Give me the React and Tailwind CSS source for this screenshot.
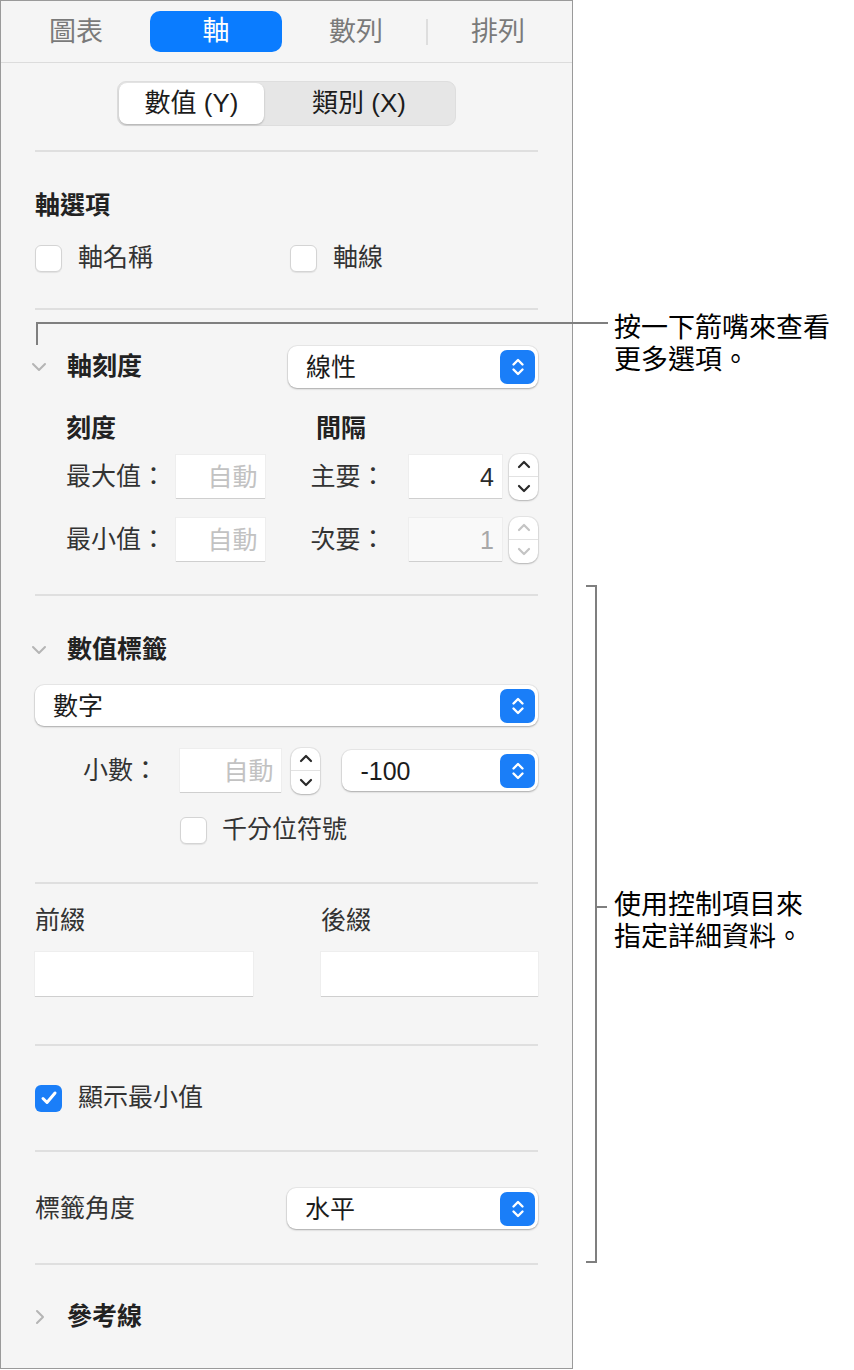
import React from 'react';

const Divider = () => <div className="h-[2px] bg-[#dfdfdf]" />;

const PopupArrows = () => (
  <div className="w-[35px] h-[34px] rounded-[7px] bg-[#1a7ef8] flex items-center justify-center">
    <svg width="16" height="24" viewBox="0 0 16 24">
      <path d="M3.5 9.5 L8 5 L12.5 9.5 M3.5 14.5 L8 19 L12.5 14.5" stroke="white" strokeWidth="2.4" fill="none" strokeLinecap="round" strokeLinejoin="round" />
    </svg>
  </div>
);

const Popup = ({ label, className }) => (
  <div className={`h-[41px] bg-white rounded-[9px] shadow-[0_0_0_1px_rgba(0,0,0,0.05),0_1px_2px_rgba(0,0,0,0.28)] flex items-center justify-between pl-[18px] pr-[3px] ${className}`}>
    <span className="text-[25px] leading-[32px] text-[#1c1c1c]">{label}</span>
    <PopupArrows />
  </div>
);

const Stepper = ({ disabled }) => {
  const c = disabled ? '#c4c4c4' : '#2a2a2a';
  return (
    <div className="w-[29px] h-[46px] rounded-[10px] bg-white shadow-[0_0_0_1px_rgba(0,0,0,0.06),0_1px_2px_rgba(0,0,0,0.22)] flex flex-col">
      <div className="flex-1 flex items-center justify-center border-b border-[#e2e2e2]">
        <svg width="14" height="9" viewBox="0 0 14 9">
          <path d="M2 7 L7 2 L12 7" stroke={c} strokeWidth="2.2" fill="none" strokeLinecap="round" strokeLinejoin="round" />
        </svg>
      </div>
      <div className="flex-1 flex items-center justify-center">
        <svg width="14" height="9" viewBox="0 0 14 9">
          <path d="M2 2 L7 7 L12 2" stroke={c} strokeWidth="2.2" fill="none" strokeLinecap="round" strokeLinejoin="round" />
        </svg>
      </div>
    </div>
  );
};

const Field = ({ value, placeholder, disabled, className }) => (
  <div className={`h-[43px] flex items-center justify-end pr-[8px] text-[25px] leading-[32px] shadow-[0_1px_0_#cfcfcf,0_0_0_1px_#eeeeee] ${disabled ? 'bg-[#f9f9f9] text-[#a8a8a8]' : 'bg-white text-[#2a2a2a]'} ${className}`}>
    {value ? value : <span className="text-[#c2c2c2]">{placeholder}</span>}
  </div>
);

const Checkbox = ({ checked }) =>
  checked ? (
    <div className="w-[27px] h-[27px] rounded-[6px] bg-[#1a7ef8] flex items-center justify-center">
      <svg width="18" height="16" viewBox="0 0 18 16">
        <path d="M3 8.5 L7 12.5 L15 3" stroke="white" strokeWidth="3" fill="none" strokeLinecap="round" strokeLinejoin="round" />
      </svg>
    </div>
  ) : (
    <div className="w-[27px] h-[27px] rounded-[6px] bg-white border border-[#d4d4d4] shadow-[0_1px_1px_rgba(0,0,0,0.08)]" />
  );

const ChevronDown = () => (
  <svg width="16" height="10" viewBox="0 0 16 10">
    <path d="M2 2 L8 8 L14 2" stroke="#b5b5b5" strokeWidth="2" fill="none" strokeLinecap="round" strokeLinejoin="round" />
  </svg>
);

const ChevronRight = () => (
  <svg width="10" height="16" viewBox="0 0 10 16">
    <path d="M2 2 L8 8 L2 14" stroke="#b5b5b5" strokeWidth="2" fill="none" strokeLinecap="round" strokeLinejoin="round" />
  </svg>
);

export default function App() {
  return (
    <div className="relative w-[854px] h-[1370px] bg-white flex font-['Liberation_Sans','Noto_Sans_CJK_TC',sans-serif]">
      {/* 檢閱器面板 */}
      <div className="w-[573px] h-[1369px] bg-[#f5f5f5] border border-[#9a9a9a] flex flex-col">
        {/* 分頁 */}
        <div className="h-[62px] border-b border-[#dcdcdc] flex items-center pl-[5px]">
          <div className="w-[140px] text-center text-[27px] leading-[34px] text-[#7a7a7a]">圖表</div>
          <div className="w-[140px] flex justify-center">
            <div className="w-[132px] h-[41px] rounded-[10px] bg-[#0a7cff] text-white text-[27px] leading-[41px] text-center">軸</div>
          </div>
          <div className="w-[140px] text-center text-[27px] leading-[34px] text-[#7a7a7a]">數列</div>
          <div className="w-[2px] h-[26px] bg-[#dedede]" />
          <div className="w-[140px] text-center text-[27px] leading-[34px] text-[#7a7a7a]">排列</div>
        </div>

        <div className="px-[34px] flex flex-col">
          <div className="pt-[18px] pb-[24px] flex justify-center">
            <div className="w-[339px] h-[45px] rounded-[9px] bg-[#e6e6e6] border border-[#dedede] flex items-center p-[1px]">
              <div className="w-[145px] h-full rounded-[8px] bg-white shadow-[0_1px_2px_rgba(0,0,0,0.25)] flex items-center justify-center text-[26px] text-[#1c1c1c]">數值 (Y)</div>
              <div className="flex-1 h-full flex items-center justify-center text-[26px] text-[#1c1c1c]">類別 (X)</div>
            </div>
          </div>
          <Divider />

          {/* 軸選項 */}
          <div className="pt-[37px] pb-[30px]">
            <div className="h-[32px] text-[25px] leading-[32px] font-bold text-[#222]">軸選項</div>
            <div className="mt-[17px] h-[40px] flex items-center">
              <div className="w-[255px] flex items-center gap-[16px]">
                <Checkbox />
                <span className="text-[25px] text-[#333]">軸名稱</span>
              </div>
              <div className="flex items-center gap-[16px]">
                <Checkbox />
                <span className="text-[25px] text-[#333]">軸線</span>
              </div>
            </div>
          </div>
          <Divider />

          {/* 軸刻度 */}
          <div className="pt-[36px] pb-[33px]">
            <div className="h-[42px] flex items-center">
              <div className="w-[32px] -ml-[4px] mr-[4px] flex items-center">
                <ChevronDown />
              </div>
              <span className="w-[222px] text-[25px] font-bold text-[#222]">軸刻度</span>
              <Popup label="線性" className="w-[251px] h-[42px]" />
            </div>
            <div className="mt-[24px] h-[32px] flex text-[25px] leading-[32px] font-bold text-[#222] pl-[31px]">
              <span className="w-[250px]">刻度</span>
              <span>間隔</span>
            </div>
            <div className="mt-[11px] h-[43px] flex items-center pl-[31px]">
              <span className="w-[112px] text-[25px] text-[#333]">最大值：</span>
              <Field placeholder="自動" className="w-[91px]" />
              <span className="ml-[45px] w-[100px] text-[25px] text-[#333]">主要：</span>
              <Field value="4" className="w-[95px]" />
              <div className="ml-[7px]"><Stepper /></div>
            </div>
            <div className="mt-[20px] h-[43px] flex items-center pl-[31px]">
              <span className="w-[112px] text-[25px] text-[#333]">最小值：</span>
              <Field placeholder="自動" className="w-[91px]" />
              <span className="ml-[45px] w-[100px] text-[25px] text-[#333]">次要：</span>
              <Field value="1" disabled className="w-[95px]" />
              <div className="ml-[7px]"><Stepper disabled /></div>
            </div>
          </div>
          <Divider />

          {/* 數值標籤 */}
          <div className="pt-[38px] pb-[36px]">
            <div className="h-[32px] flex items-center">
              <div className="w-[32px] -ml-[4px] mr-[4px] flex items-center">
                <ChevronDown />
              </div>
              <span className="text-[25px] font-bold text-[#222]">數值標籤</span>
            </div>
            <Popup label="數字" className="mt-[19px] w-full" />
            <div className="mt-[24px] h-[41px] flex items-center">
              <span className="ml-[48px] w-[98px] text-[25px] text-[#333]">小數：</span>
              <Field placeholder="自動" className="w-[102px] h-[41px]" />
              <div className="ml-[10px]"><Stepper /></div>
              <Popup label="-100" className="ml-[22px] w-[197px]" />
            </div>
            <div className="mt-[23px] h-[32px] flex items-center gap-[15px] ml-[145px]">
              <Checkbox />
              <span className="text-[25px] text-[#333]">千分位符號</span>
            </div>
          </div>
          <Divider />

          {/* 前綴／後綴 */}
          <div className="pt-[20px] pb-[48px]">
            <div className="h-[32px] flex text-[25px] leading-[32px] text-[#333]">
              <span className="w-[286px]">前綴</span>
              <span>後綴</span>
            </div>
            <div className="mt-[16px] flex gap-[68px]">
              <div className="w-[218px] h-[44px] bg-white shadow-[0_1px_0_#cfcfcf,0_0_0_1px_#eeeeee]" />
              <div className="w-[218px] h-[44px] bg-white shadow-[0_1px_0_#cfcfcf,0_0_0_1px_#eeeeee]" />
            </div>
          </div>
          <Divider />

          <div className="pt-[36px] pb-[36px]">
            <div className="h-[32px] flex items-center gap-[16px]">
              <Checkbox checked />
              <span className="text-[25px] text-[#333]">顯示最小值</span>
            </div>
          </div>
          <Divider />

          <div className="pt-[36px] pb-[34px]">
            <div className="h-[41px] flex items-center justify-between">
              <span className="text-[25px] text-[#333]">標籤角度</span>
              <Popup label="水平" className="w-[251px]" />
            </div>
          </div>
          <Divider />

          <div className="pt-[36px]">
            <div className="h-[32px] flex items-center">
              <div className="w-[32px] flex items-center">
                <ChevronRight />
              </div>
              <span className="text-[25px] font-bold text-[#222]">參考線</span>
            </div>
          </div>
        </div>
      </div>

      {/* 說明文字 */}
      <div className="flex-1 pl-[41px] text-[27px] leading-[32px] text-black">
        <div className="mt-[312px]">
          <div>按一下箭嘴來查看</div>
          <div>更多選項。</div>
        </div>
        <div className="mt-[513px]">
          <div>使用控制項目來</div>
          <div>指定詳細資料。</div>
        </div>
      </div>

      {/* 標註線 */}
      <div className="absolute left-[36px] top-[322px] w-[572px] h-[2px] bg-[#7f7f7f]" />
      <div className="absolute left-[36px] top-[322px] w-[2px] h-[23px] bg-[#7f7f7f]" />
      <div className="absolute left-[586px] top-[585px] w-[11px] h-[2px] bg-[#7f7f7f]" />
      <div className="absolute left-[595px] top-[585px] w-[2px] h-[678px] bg-[#7f7f7f]" />
      <div className="absolute left-[586px] top-[1261px] w-[11px] h-[2px] bg-[#7f7f7f]" />
      <div className="absolute left-[595px] top-[906px] w-[12px] h-[2px] bg-[#7f7f7f]" />
    </div>
  );
}
